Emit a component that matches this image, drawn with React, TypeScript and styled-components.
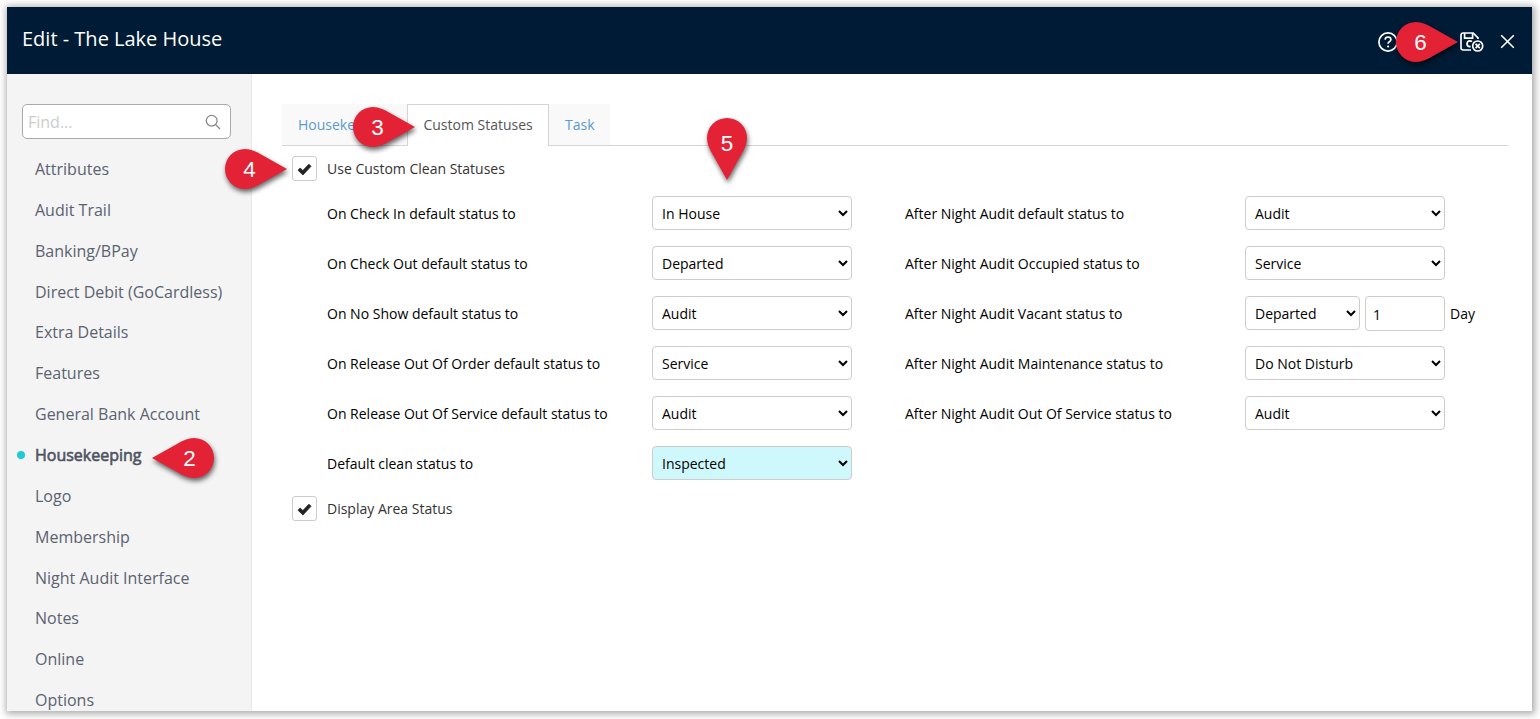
import React from "react";
import styled, { createGlobalStyle, css } from "styled-components";

const GlobalStyle = createGlobalStyle`
  * { box-sizing: border-box; }
  body {
    margin: 0;
    background: #fff;
    font-family: "Open Sans", "Noto Sans", sans-serif;
    font-size: 14px;
    color: #000;
    overflow: hidden;
  }
`;

const Page = styled.div`
  position: relative;
  height: 719px;
  padding: 7px 8px 8px 7px;
  overflow: hidden;
`;

const Dialog = styled.div`
  display: flex;
  flex-direction: column;
  height: 704px;
  background: #fff;
  box-shadow: 1px 1px 7px 2px rgba(0, 0, 0, 0.33);
`;

const Header = styled.header`
  display: flex;
  align-items: center;
  justify-content: space-between;
  flex: none;
  height: 67px;
  padding: 2px 17px 0 15px;
  background: #001b35;
  color: #fff;
`;

const Title = styled.h1`
  margin: 0 0 5px;
  font-size: 20px;
  line-height: 28px;
  font-weight: 400;
`;

const HeaderActions = styled.div`
  display: flex;
  align-items: center;
  svg { display: block; }
`;

const HelpSlot = styled.span`
  margin-right: 62px;
`;

const SaveSlot = styled.span`
  margin-right: 16px;
`;

const Body = styled.div`
  display: flex;
  flex: 1;
  min-height: 0;
`;

const Sidebar = styled.aside`
  flex: none;
  width: 245px;
  padding: 30px 20px 0 15px;
  background: #f4f4f4;
  border-right: 1px solid #e9e9e9;
  overflow: hidden;
`;

const Search = styled.label`
  display: flex;
  align-items: center;
  justify-content: space-between;
  width: 209px;
  height: 35px;
  padding: 0 9px 0 5px;
  border: 1px solid #aaa;
  border-radius: 5px;
  background: #fff;
`;

const SearchInput = styled.input`
  width: 150px;
  padding: 0;
  border: 0;
  outline: 0;
  background: transparent;
  font: 16px "Open Sans", sans-serif;
  &::placeholder { color: #ccc; opacity: 1; }
`;

const Nav = styled.nav`
  display: flex;
  flex-direction: column;
  margin-top: 10.03px;
`;

const NavItem = styled.a<{ $active?: boolean }>`
  position: relative;
  flex: none;
  height: 40.86px;
  padding-left: 13px;
  font-size: 16px;
  line-height: 40.86px;
  color: #5b6270;
  ${(p) =>
    p.$active &&
    css`
      color: #4d5360;
      -webkit-text-stroke: 0.6px #4d5360;
      &::before {
        content: "";
        position: absolute;
        left: -5px;
        top: 16px;
        width: 8px;
        height: 8px;
        border-radius: 50%;
        background: #1fcbd6;
      }
    `}
`;

const Content = styled.main`
  flex: 1;
  padding: 30px 24px 0 30px;
`;

const Tabs = styled.div`
  display: flex;
  height: 42px;
  border-bottom: 1px solid #d5d5d5;
`;

const Tab = styled.button<{ $width: number; $active?: boolean }>`
  width: ${(p) => p.$width}px;
  height: 41px;
  padding: 0 0 0 16px;
  border: 0;
  background: #f9f9f9;
  color: #5a9bd0;
  font: 14px "Open Sans", sans-serif;
  text-align: left;
  white-space: nowrap;
  overflow: hidden;
  ${(p) =>
    p.$active &&
    css`
      height: 42px;
      padding: 0 0 2px 15.4px;
      border: 1px solid #d5d5d5;
      border-bottom: 0;
      background: #fff;
      color: #555;
    `}
`;

const CheckRow = styled.label`
  display: flex;
  align-items: center;
  gap: 10px;
  height: 25px;
  margin-left: 10px;
  color: #333;
`;

const CheckBox = styled.span`
  display: flex;
  align-items: center;
  justify-content: center;
  width: 25px;
  height: 25px;
  padding-top: 2px;
  border: 1px solid #ccc;
  border-radius: 3px;
  background: #fff;
`;

const Fields = styled.div`
  display: grid;
  grid-template-columns: 325px 253px 340px 1fr;
  grid-auto-rows: 35px;
  row-gap: 15px;
  margin: 15px 0 15px 45px;
`;

const FieldLabel = styled.span`
  line-height: 35px;
  white-space: nowrap;
`;

const FieldControl = styled.div`
  display: flex;
  align-items: flex-start;
  gap: 5px;
  line-height: 35px;
`;

const Select = styled.select<{ $width?: number; $highlight?: boolean }>`
  width: ${(p) => p.$width ?? 200}px;
  height: 34px;
  padding: 0 0 0 5px;
  border: 1px solid #ccc;
  border-radius: 4px;
  background-color: ${(p) => (p.$highlight ? "#cff8fd" : "#fff")};
  color: #000;
  font: 14px "Open Sans", sans-serif;
`;

const NumberInput = styled.input`
  width: 80px;
  height: 35px;
  padding: 2px 7px 0;
  border: 1px solid #ccc;
  border-radius: 4px;
  font: 14px "Open Sans", sans-serif;
  color: #000;
`;

const Top = styled.div`
  padding-top: 10px;
`;

type Direction = "left" | "right" | "down";

const Marker = styled.div<{ $x: number; $y: number; $dir: Direction }>`
  position: absolute;
  left: ${(p) => p.$x}px;
  top: ${(p) => p.$y}px;
  width: ${(p) => (p.$dir === "down" ? 40 : 62)}px;
  height: ${(p) => (p.$dir === "down" ? 62 : 40)}px;
  color: #fff;
  font: 22.5px/40px "Liberation Sans", Arial, sans-serif;
  svg {
    position: absolute;
    left: 0;
    top: 0;
    overflow: visible;
    filter: drop-shadow(1px 3px 2.5px rgba(0, 0, 0, 0.6));
  }
`;

const MarkerNumber = styled.span<{ $dir: Direction }>`
  position: absolute;
  width: 40px;
  text-align: center;
  left: ${(p) => (p.$dir === "right" ? 4.5 : p.$dir === "left" ? 17.5 : 0)}px;
  top: ${(p) => (p.$dir === "down" ? 6 : 1)}px;
`;

const turns: Record<Direction, string | undefined> = {
  right: undefined,
  left: "translate(62 0) scale(-1 1)",
  down: "translate(40 0) rotate(90)",
};

function Pin({ n, x, y, dir }: { n: number; x: number; y: number; dir: Direction }) {
  const down = dir === "down";
  return (
    <Marker $x={x} $y={y} $dir={dir}>
      <svg width={down ? 40 : 62} height={down ? 62 : 40}>
        <path
          transform={turns[dir]}
          d="M62 20 L37 6 C31 2.5 26 0 20 0 A20 20 0 0 0 20 40 C26 40 31 37.5 37 34 Z"
          fill="#e32236"
        />
      </svg>
      <MarkerNumber $dir={dir}>{n}</MarkerNumber>
    </Marker>
  );
}

const Check = () => (
  <svg width="15" height="13" viewBox="0 0 15 13">
    <path d="M1 7.2 3.2 5 5.8 7.6 11.9 1.2 14 3.3 5.9 12Z" fill="#222" stroke="#222" strokeWidth="0.8" strokeLinejoin="round" />
  </svg>
);

const HelpIcon = () => (
  <svg width="20" height="20" viewBox="0 0 20 20" fill="none" stroke="#fff" strokeWidth="1.7">
    <circle cx="10" cy="10" r="9.1" />
    <path d="M7.1 7.6C7.2 5.9 8.4 5 10 5s2.9 1 2.9 2.5c0 2.2-2.8 2-2.8 4.3" />
    <circle cx="10.1" cy="14.5" r="1.1" fill="#fff" stroke="none" />
  </svg>
);

const SaveCloseIcon = () => (
  <svg width="24" height="20" viewBox="0 0 24 20" fill="none" stroke="#fff" strokeWidth="1.7">
    <path d="M11 18H3.2C1.8 18 1 17.2 1 15.8V3.2C1 1.8 1.8 1 3.2 1H13.2L18 5.8V7" />
    <path d="M4.6 1V6.2H12.6V1" />
    <path d="M12 9.6C11.2 9 10.6 8.9 9.8 8.9C8 8.9 7 10.2 7 11.8C7 13.4 8 14.7 9.8 14.7H10.6" />
    <circle cx="17.7" cy="14" r="5" />
    <path d="M15.6 11.9l4.2 4.2M19.8 11.9l-4.2 4.2" />
  </svg>
);

const CloseIcon = () => (
  <svg width="15" height="15" viewBox="0 0 15 15" stroke="#fff" strokeWidth="1.6">
    <path d="M1.2 1.2 13.8 13.8M13.8 1.2 1.2 13.8" />
  </svg>
);

const SearchIcon = () => (
  <svg width="16" height="16" viewBox="0 0 16 16" fill="none" stroke="#888" strokeWidth="1.3">
    <circle cx="6.7" cy="6.7" r="5.4" />
    <path d="M10.6 10.6 15 15" />
  </svg>
);

const navItems = [
  "Attributes", "Audit Trail", "Banking/BPay", "Direct Debit (GoCardless)", "Extra Details",
  "Features", "General Bank Account", "Housekeeping", "Logo", "Membership",
  "Night Audit Interface", "Notes", "Online", "Options",
];

const rows: [string, string, string?, string?][] = [
  ["On Check In default status to", "In House", "After Night Audit default status to", "Audit"],
  ["On Check Out default status to", "Departed", "After Night Audit Occupied status to", "Service"],
  ["On No Show default status to", "Audit", "After Night Audit Vacant status to", "Departed"],
  ["On Release Out Of Order default status to", "Service", "After Night Audit Maintenance status to", "Do Not Disturb"],
  ["On Release Out Of Service default status to", "Audit", "After Night Audit Out Of Service status to", "Audit"],
  ["Default clean status to", "Inspected"],
];

export default function App() {
  return (
    <Page>
      <GlobalStyle />
      <Dialog>
        <Header>
          <Title>Edit - The Lake House</Title>
          <HeaderActions>
            <HelpSlot><HelpIcon /></HelpSlot>
            <SaveSlot><SaveCloseIcon /></SaveSlot>
            <CloseIcon />
          </HeaderActions>
        </Header>
        <Body>
          <Sidebar>
            <Search>
              <SearchInput placeholder="Find..." />
              <SearchIcon />
            </Search>
            <Nav>
              {navItems.map((item) => (
                <NavItem key={item} $active={item === "Housekeeping"}>{item}</NavItem>
              ))}
            </Nav>
          </Sidebar>
          <Content>
            <Tabs>
              <Tab $width={125}>Housekeeping</Tab>
              <Tab $width={142} $active>Custom Statuses</Tab>
              <Tab $width={61}>Task</Tab>
            </Tabs>
            <Top>
              <CheckRow>
                <CheckBox><Check /></CheckBox>
                Use Custom Clean Statuses
              </CheckRow>
            </Top>
            <Fields>
              {rows.map(([label, value, label2, value2], i) => (
                <React.Fragment key={label}>
                  <FieldLabel>{label}</FieldLabel>
                  <FieldControl>
                    <Select $highlight={value === "Inspected"}><option>{value}</option></Select>
                  </FieldControl>
                  {label2 && (
                    <>
                      <FieldLabel>{label2}</FieldLabel>
                      <FieldControl>
                        <Select $width={i === 2 ? 115 : 200}><option>{value2}</option></Select>
                        {i === 2 && (
                          <>
                            <NumberInput defaultValue="1" />
                            <span>Day</span>
                          </>
                        )}
                      </FieldControl>
                    </>
                  )}
                </React.Fragment>
              ))}
            </Fields>
            <CheckRow>
              <CheckBox><Check /></CheckBox>
              Display Area Status
            </CheckRow>
          </Content>
        </Body>
      </Dialog>
      <Pin n={2} x={152} y={438} dir="left" />
      <Pin n={3} x={353} y={107} dir="right" />
      <Pin n={4} x={225} y={149} dir="right" />
      <Pin n={5} x={707} y={118} dir="down" />
      <Pin n={6} x={1396} y={22} dir="right" />
    </Page>
  );
}
